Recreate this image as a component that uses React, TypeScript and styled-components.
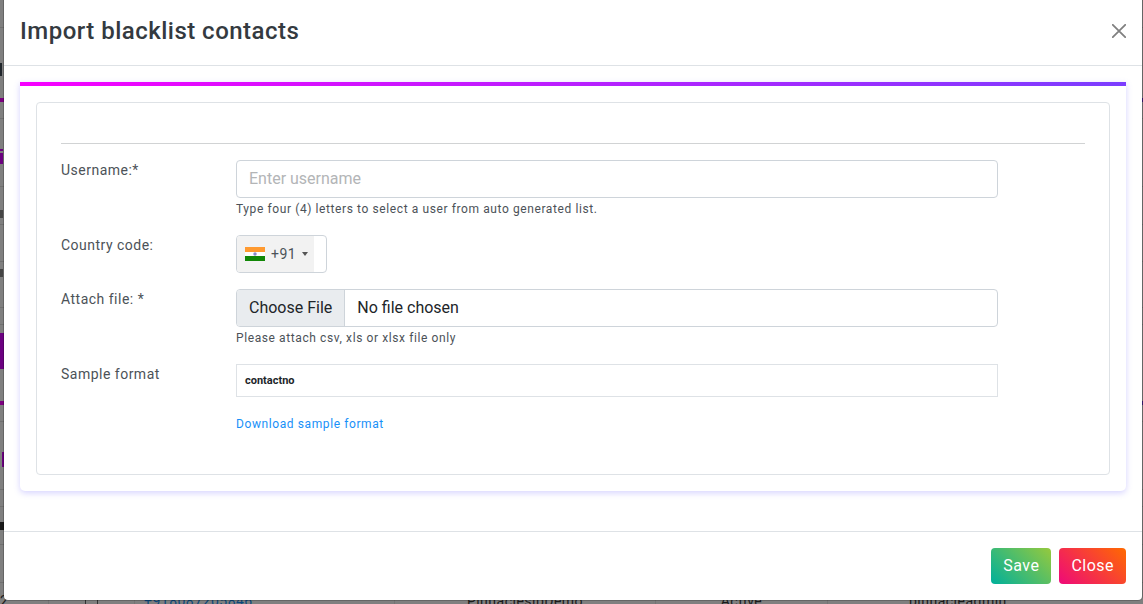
import React from "react";
import styled, { createGlobalStyle } from "styled-components";

const Global = createGlobalStyle`
  *, *::before, *::after { box-sizing: border-box; }
  body {
    margin: 0;
    background: #7f7f7f;
    color: #4c5258;
    font-family: Roboto, "Liberation Sans", sans-serif;
    font-size: 14px;
    line-height: 20px;
  }
`;

const Page = styled.div`
  position: relative;
  min-height: 100vh;
  padding: 0 1px 4px 4px;
  overflow: hidden;
`;

const Underlay = styled.div`
  position: absolute;
  inset: 0;
  overflow: hidden;
`;

const Mark = styled.div<{ $top: number; $height: number; $color: string; $left?: number }>`
  position: absolute;
  top: ${(p) => p.$top}px;
  left: ${(p) => p.$left ?? 0}px;
  right: 0;
  height: ${(p) => p.$height}px;
  background: ${(p) => p.$color};
`;

const HiddenRow = styled.div`
  position: absolute;
  top: 591px;
  left: 0;
  right: 0;
  display: grid;
  grid-template-columns: 49px 37px 12px 37px 260px 261px 172px 1fr;
  color: #1b1b1b;
  letter-spacing: 0.035em;
`;

const HiddenCell = styled.div<{ $tone?: string; $edge?: string }>`
  height: 20px;
  border-right: 1px solid ${(p) => p.$edge ?? "#747474"};
  color: ${(p) => p.$tone ?? "inherit"};
  text-align: center;
  &:first-child { text-align: left; }
  &:nth-child(5) { padding-left: 9px; text-align: left; }
  &:last-child { padding-left: 81px; text-align: left; border: 0; }
`;

const Dialog = styled.section`
  position: relative;
  background: #fff;
  border-radius: 0 0 4px 4px;
  box-shadow: 0 0 0 1px rgba(0, 0, 0, 0.2);
`;

const Header = styled.header`
  display: flex;
  align-items: center;
  justify-content: space-between;
  height: 66px;
  padding: 0 16px 4px;
  border-bottom: 1px solid #dee2e6;
`;

const Title = styled.h1`
  margin: 0;
  color: #343a40;
  font-size: 24px;
  font-weight: 500;
  line-height: 36px;
  letter-spacing: 0.02em;
`;

const Dismiss = styled.button`
  display: flex;
  padding: 0;
  border: 0;
  background: none;
  color: #808080;
`;

const Body = styled.div`
  padding: 16px 16px 40px;
`;

const Card = styled.div`
  padding: 16px;
  border-top: 4px solid;
  border-image: linear-gradient(to right, #f700ff, #7b3dff) 1;
  border-radius: 0 0 5px 5px;
  box-shadow: 0 2px 6px rgba(105, 92, 255, 0.28);
`;

const Panel = styled.form`
  padding: 40px 24px 24px;
  border: 1px solid #dee2e6;
  border-radius: 4px;
`;

const Rule = styled.hr`
  height: 1px;
  margin: 0 0 16px;
  border: 0;
  background: #d1d3d4;
`;

const Row = styled.div`
  display: grid;
  grid-template-columns: 175px minmax(0, 762px);
  margin-bottom: 16px;
`;

const Label = styled.label`
  letter-spacing: 0.035em;
`;

const Caption = styled.div`
  letter-spacing: 0.035em;
`;

const TextInput = styled.input`
  display: block;
  width: 100%;
  height: 38px;
  padding: 0 12px 2px;
  border: 1px solid #ced4da;
  border-radius: 4px;
  background: #fff;
  font: 16px/24px Roboto, "Liberation Sans", sans-serif;
  &::placeholder { color: #b3b5b7; opacity: 1; }
`;

const FileInput = styled.input`
  display: block;
  width: 100%;
  height: 38px;
  border: 1px solid #ced4da;
  border-radius: 4px;
  background: #fff;
  color: #212529;
  font: 16px/24px Roboto, "Liberation Sans", sans-serif;
  overflow: hidden;
  &::file-selector-button {
    height: 36px;
    margin: 0 12px 0 0;
    padding: 0 12px;
    border: 0;
    border-right: 1px solid #ced4da;
    background: #e9ecef;
    color: #212529;
    font: inherit;
  }
`;

const Help = styled.p`
  margin: 0;
  padding-top: 1px;
  font-size: 12px;
  letter-spacing: 0.05em;
`;

const DialField = styled.div`
  display: flex;
  width: 91px;
  height: 38px;
  border: 1px solid #ced4da;
  border-radius: 4px;
  overflow: hidden;
`;

const DialButton = styled.button`
  display: flex;
  align-items: center;
  width: 77px;
  padding: 0 0 0 8px;
  border: 0;
  background: #f2f2f2;
  color: #4c5258;
  font: 14px/20px Roboto, "Liberation Sans", sans-serif;
  letter-spacing: 0.035em;
  svg { flex: none; }
  span { margin: 0 6px; }
`;

const Sample = styled.table`
  width: 100%;
  border-collapse: collapse;
  border: 1px solid #dee2e6;
  th {
    height: 32px;
    padding: 0 8px;
    color: #212529;
    font-size: 11px;
    font-weight: 700;
    text-align: left;
  }
`;

const Download = styled.a`
  display: inline-block;
  margin-top: 17px;
  color: #1890f8;
  font-size: 12px;
  letter-spacing: 0.05em;
  text-decoration: none;
`;

const Footer = styled.footer`
  display: flex;
  justify-content: flex-end;
  gap: 8px;
  padding: 16px;
  border-top: 1px solid #dee2e6;
`;

const Action = styled.button<{ $from: string; $to: string }>`
  height: 36px;
  padding: 0 12px;
  border: 0;
  border-radius: 4px;
  background: linear-gradient(45deg, ${(p) => p.$from}, ${(p) => p.$to});
  color: #fff;
  font: 16px/24px Roboto, "Liberation Sans", sans-serif;
  letter-spacing: 0.03em;
`;

const lines = [27, 118, 186, 224, 261, 307, 324, 421, 489, 506, 544, 582];

export default function App() {
  return (
    <>
      <Global />
      <Page>
        <Underlay aria-hidden="true">
          {lines.map((y) => (
            <Mark key={y} $top={y} $height={1} $color="#707070" />
          ))}
          <Mark $top={98} $height={4} $color="linear-gradient(to right, #7b0080, #3d1e80)" />
          <Mark $top={401} $height={4} $color="linear-gradient(to right, #7b0080, #3d1e80)" />
          <Mark $top={333} $height={36} $color="linear-gradient(to right, #6b0080 4px, #7f7f7f 4px)" />
          <Mark $top={63} $height={13} $color="linear-gradient(to right, #20262b 2px, #7f7f7f 2px)" />
          <Mark $top={149} $height={2} $color="linear-gradient(to right, #6b0080 3px, #7f7f7f 3px)" />
          <Mark $top={153} $height={11} $color="linear-gradient(to right, #6b0080 3px, #7f7f7f 3px)" />
          <Mark $top={452} $height={15} $left={2} $color="linear-gradient(to right, #6b0080 2px, #7f7f7f 2px)" />
          <Mark $top={210} $height={8} $color="linear-gradient(to right, #444 3px, #7f7f7f 3px)" />
          <Mark $top={269} $height={8} $color="linear-gradient(to right, #444 3px, #7f7f7f 3px)" />
          <Mark $top={522} $height={8} $color="linear-gradient(to right, #181818 4px, #7f7f7f 4px)" />
          <HiddenRow>
            <HiddenCell>2</HiddenCell>
            <HiddenCell $edge="#333" />
            <HiddenCell $edge="#333" />
            <HiddenCell />
            <HiddenCell $tone="#0c487c">+918087205846</HiddenCell>
            <HiddenCell>PinnaclesipDemo</HiddenCell>
            <HiddenCell>Active</HiddenCell>
            <HiddenCell>pinnacleadmin</HiddenCell>
          </HiddenRow>
        </Underlay>

        <Dialog role="dialog" aria-labelledby="dialog-title">
          <Header>
            <Title id="dialog-title">Import blacklist contacts</Title>
            <Dismiss type="button" aria-label="Dismiss">
              <svg width="14" height="14" viewBox="0 0 14 14" fill="none" stroke="currentColor" strokeWidth="1.8" strokeLinecap="round">
                <path d="M.8 .8 13.2 13.2M13.2 .8 .8 13.2" />
              </svg>
            </Dismiss>
          </Header>
          <Body>
            <Card>
              <Panel id="import-form">
                <Rule />
                <Row>
                  <Label htmlFor="username">Username:*</Label>
                  <div>
                    <TextInput id="username" type="text" placeholder="Enter username" />
                    <Help>Type four (4) letters to select a user from auto generated list.</Help>
                  </div>
                </Row>
                <Row>
                  <Label htmlFor="country">Country code:</Label>
                  <DialField>
                    <DialButton id="country" type="button">
                      <svg width="20" height="14" viewBox="0 0 20 14">
                        <rect width="20" height="14" fill="#fff" />
                        <rect width="20" height="5" fill="#ff9a30" />
                        <rect y="9" width="20" height="5" fill="#128807" />
                        <circle cx="10" cy="7" r="1.7" fill="#8888c8" />
                      </svg>
                      <span>+91</span>
                      <svg width="6" height="4" viewBox="0 0 6 4">
                        <path d="M0 0H6L3 4Z" fill="#555" />
                      </svg>
                    </DialButton>
                  </DialField>
                </Row>
                <Row>
                  <Label htmlFor="file">Attach file: *</Label>
                  <div>
                    <FileInput id="file" type="file" />
                    <Help>Please attach csv, xls or xlsx file only</Help>
                  </div>
                </Row>
                <Row>
                  <Caption>Sample format</Caption>
                  <div>
                    <Sample>
                      <thead>
                        <tr>
                          <th scope="col">contactno</th>
                        </tr>
                      </thead>
                    </Sample>
                    <Download href="#sample">Download sample format</Download>
                  </div>
                </Row>
              </Panel>
            </Card>
          </Body>
          <Footer>
            <Action type="submit" form="import-form" $from="#00b09b" $to="#96c93d">Save</Action>
            <Action type="button" $from="#ee0979" $to="#ff6a00">Close</Action>
          </Footer>
        </Dialog>
      </Page>
    </>
  );
}
